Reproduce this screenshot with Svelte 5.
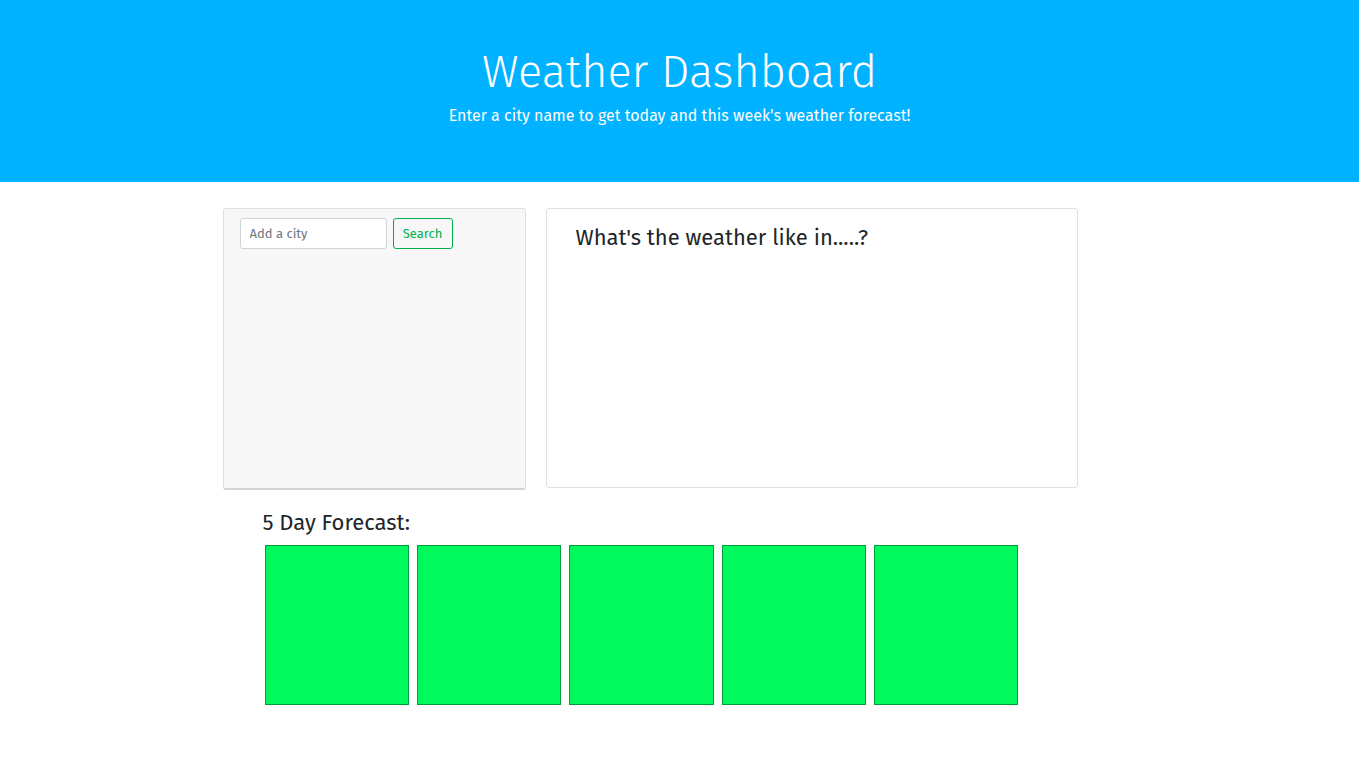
<script>
  let city = $state('');
  let place = $state('');
  const days = [1, 2, 3, 4, 5];

  function search(event) {
    event.preventDefault();
    place = city.trim();
  }
</script>

<header>
  <h1>Weather Dashboard</h1>
  <p>Enter a city name to get today and this week's weather forecast!</p>
</header>

<main>
  <div class="top">
    <aside>
      <form onsubmit={search}>
        <input type="text" placeholder="Add a city" aria-label="Add a city" bind:value={city} />
        <button type="submit">Search</button>
      </form>
    </aside>
    <section class="today">
      <h2>What's the weather like in{place ? ` ${place}` : '.....'}?</h2>
    </section>
  </div>

  <section class="forecast">
    <h2>5 Day Forecast:</h2>
    <div class="days">
      {#each days as day (day)}
        <article></article>
      {/each}
    </div>
  </section>
</main>

<style>
  :global(body) {
    margin: 0;
    background: #fff;
    color: #212529;
    font-family: "Fira Sans", "Noto Sans", sans-serif;
    font-size: 16px;
    line-height: 24px;
  }

  :global(*) {
    box-sizing: border-box;
  }

  header {
    padding: 44px 16px 54px;
    background: #00b2ff;
    color: #fff;
    text-align: center;
  }

  h1 {
    margin: 0 0 4px;
    font-size: 45px;
    font-weight: 300;
    line-height: 56px;
  }

  header p {
    margin: 0;
    font-size: 16px;
    font-weight: 400;
  }

  main {
    max-width: 914px;
    margin: 26px auto 0;
  }

  .top {
    display: grid;
    grid-template-columns: 303fr 532fr;
    gap: 20px;
    align-items: start;
    margin-right: 59px;
  }

  aside {
    min-height: 282px;
    padding: 9px 16px;
    border: 1px solid #dfdfdf;
    border-bottom: 2px solid #d3d3d3;
    border-radius: 3px;
    background: #f7f7f7;
  }

  form {
    display: flex;
    gap: 6px;
  }

  input,
  button {
    height: 31px;
    border-radius: 3px;
    font-family: inherit;
    font-size: 13px;
    line-height: 20px;
  }

  input {
    width: 147px;
    padding: 4px 9px;
    border: 1px solid #ced4da;
    background: #fff;
    color: #495057;
  }

  input::placeholder {
    color: #6c757d;
    opacity: 1;
  }

  button {
    width: 60px;
    padding: 4px 0;
    border: 1px solid #00b04c;
    background: transparent;
    color: #00b04c;
    font-weight: 400;
    cursor: pointer;
  }

  h2 {
    margin: 0;
    font-size: 22px;
    font-weight: 400;
    line-height: 30px;
  }

  .today {
    min-height: 280px;
    padding: 14px 29px;
    border: 1px solid #dfdfdf;
    border-radius: 3px;
  }

  .forecast {
    padding: 18px 118px 0 40px;
  }

  .days {
    display: grid;
    grid-template-columns: repeat(5, 1fr);
    gap: 8px;
    margin: 7px 0 0 2px;
  }

  article {
    height: 160px;
    border: 1px solid #009c3c;
    background: #00f95c;
  }
</style>
